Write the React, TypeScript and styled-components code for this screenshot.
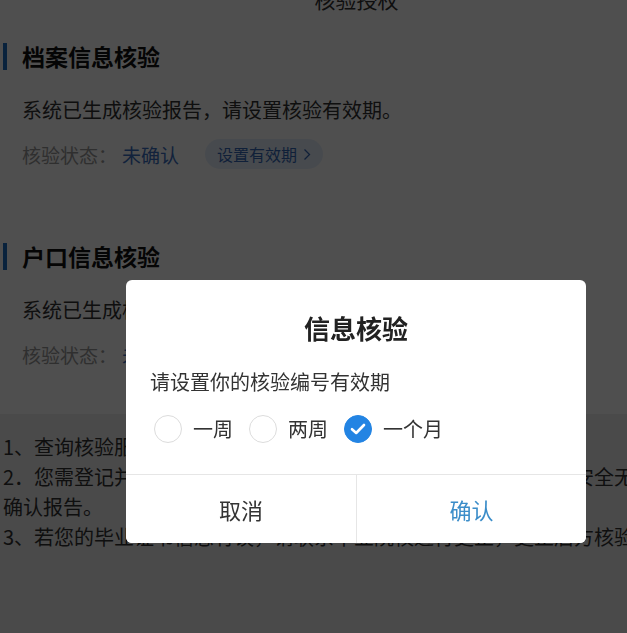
import React, { useState } from "react";
import styled, { createGlobalStyle, css } from "styled-components";

const GlobalStyle = createGlobalStyle`
  html, body {
    margin: 0;
    padding: 0;
    background: #eeeeee;
    overflow: hidden;
  }
  body {
    font-family: "Noto Sans CJK SC", "Noto Sans", sans-serif;
  }
  * { box-sizing: border-box; }
`;

const Page = styled.div`
  width: 627px;
  height: 633px;
  overflow: hidden;
  position: relative;
  background: #eeeeee;
`;

const Header = styled.div`
  display: flex;
  justify-content: center;
  height: 30px;
  margin-top: -16px;
  padding-left: 86px;
  line-height: 30px;
  font-size: 21px;
  color: #333;
  background: #fff;
`;

const Section = styled.section`
  background: #fff;
  padding: 29px 0 45px;
`;

const TitleRow = styled.div`
  display: flex;
  align-items: center;
  gap: 15px;
  height: 27px;
  margin-left: 3px;
`;

const Bar = styled.span`
  width: 4px;
  height: 27px;
  background: #1f6fc0;
`;

const Title = styled.h2`
  margin: 0;
  font-size: 23px;
  line-height: 27px;
  font-weight: 700;
  color: #111;
`;

const Desc = styled.p`
  margin: 26px 0 0;
  padding-left: 22px;
  font-size: 20px;
  line-height: 28px;
  color: #333;
`;

const StatusRow = styled.div`
  display: flex;
  align-items: center;
  height: 30px;
  margin-top: 15px;
  padding-left: 22px;
  font-size: 19px;
`;

const StatusLabel = styled.span`
  color: #999;
`;

const StatusValue = styled.span`
  margin-left: 5px;
  color: #3a6fc0;
`;

const ValidityButton = styled.button`
  display: flex;
  align-items: center;
  gap: 6px;
  height: 30px;
  margin-left: 26px;
  padding: 0 12px;
  border: none;
  border-radius: 15px;
  background: #e6effa;
  color: #3568b8;
  font-family: inherit;
  font-size: 16px;
`;

const Notes = styled.div`
  padding: 18px 0 0 3px;
  font-size: 20px;
  line-height: 30px;
  color: #333;
`;

const NoteLine = styled.p`
  margin: 0;
  white-space: nowrap;
`;

const Overlay = styled.div`
  position: fixed;
  inset: 0;
  background: rgba(0, 0, 0, 0.69);
  padding: 280px 0 0 126px;
`;

const Dialog = styled.div`
  width: 460px;
  background: #fff;
  border-radius: 6px;
  overflow: hidden;
`;

const DialogBody = styled.div`
  padding: 30px 24px 31px;
`;

const DialogTitle = styled.h3`
  margin: 0;
  text-align: center;
  font-size: 26px;
  line-height: 36px;
  font-weight: 700;
  color: #222;
`;

const Prompt = styled.p`
  margin: 22px 0 0;
  font-size: 20px;
  line-height: 28px;
  color: #333;
`;

const Options = styled.div`
  display: flex;
  align-items: center;
  gap: 16px;
  margin: 19px 0 0 4px;
`;

const Option = styled.label`
  display: flex;
  align-items: center;
  gap: 11px;
  font-size: 20px;
  line-height: 28px;
  color: #333;
  cursor: pointer;
`;

const Circle = styled.span<{ $checked: boolean }>`
  display: flex;
  align-items: center;
  justify-content: center;
  width: 28px;
  height: 28px;
  border-radius: 50%;
  border: 1px solid #dcdcdc;
  background: #fff;
  ${({ $checked }) =>
    $checked &&
    css`
      border-color: #2384e3;
      background: #2384e3;
    `}
`;

const Actions = styled.div`
  display: grid;
  grid-template-columns: 1fr 1fr;
  height: 69px;
  border-top: 1px solid #e6e6e6;
`;

const Action = styled.button<{ $primary?: boolean }>`
  border: none;
  background: #fff;
  font-family: inherit;
  font-size: 22px;
  color: ${({ $primary }) => ($primary ? "#3b8dc9" : "#333")};
  ${({ $primary }) =>
    $primary &&
    css`
      border-left: 1px solid #e6e6e6;
    `}
`;

const Chevron = () => (
  <svg width="8" height="13" viewBox="0 0 8 13" fill="none">
    <path d="M1.5 1.5L6.5 6.5L1.5 11.5" stroke="#3568b8" strokeWidth="1.3" />
  </svg>
);

const Check = () => (
  <svg width="16" height="12" viewBox="0 0 16 12" fill="none">
    <path d="M2 6.2L6.2 10L14 2" stroke="#fff" strokeWidth="2.6" strokeLinecap="round" strokeLinejoin="round" />
  </svg>
);

function CheckSection({ title }: { title: string }) {
  return (
    <Section>
      <TitleRow>
        <Bar />
        <Title>{title}</Title>
      </TitleRow>
      <Desc>系统已生成核验报告，请设置核验有效期。</Desc>
      <StatusRow>
        <StatusLabel>核验状态：</StatusLabel>
        <StatusValue>未确认</StatusValue>
        <ValidityButton>
          设置有效期
          <Chevron />
        </ValidityButton>
      </StatusRow>
    </Section>
  );
}

const periods = ["一周", "两周", "一个月"];

export default function App() {
  const [period, setPeriod] = useState("一个月");

  return (
    <Page>
      <GlobalStyle />
      <Header>核验授权</Header>
      <CheckSection title="档案信息核验" />
      <CheckSection title="户口信息核验" />
      <Notes>
        <NoteLine>1、查询核验服务需本人实名认证后进行。</NoteLine>
        <NoteLine>2．您需登记并核对个人档案信息，确认核验报告内容准确完整、安全无误后再</NoteLine>
        <NoteLine>确认报告。</NoteLine>
        <NoteLine>3、若您的毕业证书信息有误，请联系毕业院校进行更正，更正后方核验</NoteLine>
      </Notes>
      <Overlay>
        <Dialog>
          <DialogBody>
            <DialogTitle>信息核验</DialogTitle>
            <Prompt>请设置你的核验编号有效期</Prompt>
            <Options>
              {periods.map((p) => (
                <Option key={p} onClick={() => setPeriod(p)}>
                  <Circle $checked={period === p}>{period === p && <Check />}</Circle>
                  {p}
                </Option>
              ))}
            </Options>
          </DialogBody>
          <Actions>
            <Action>取消</Action>
            <Action $primary>确认</Action>
          </Actions>
        </Dialog>
      </Overlay>
    </Page>
  );
}
